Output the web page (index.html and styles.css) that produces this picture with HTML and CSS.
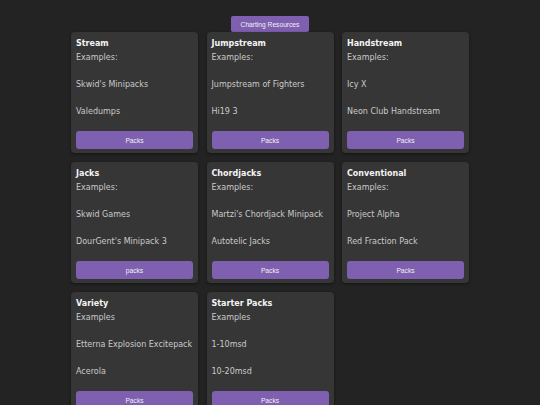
FILE: index.html
```html
<!DOCTYPE html>
<html lang="en">
<head>
<meta charset="utf-8">
<title>Charting Resources</title>
<link rel="stylesheet" href="styles.css">
</head>
<body>
<main class="page">
  <button class="top-btn">Charting Resources</button>
  <section class="grid">
    <div class="card">
      <div class="card-title">Stream</div>
      <div class="card-sub">Examples:</div>
      <div class="card-item">Skwid's Minipacks</div>
      <div class="card-item">Valedumps</div>
      <button class="pack-btn">Packs</button>
    </div>
    <div class="card">
      <div class="card-title">Jumpstream</div>
      <div class="card-sub">Examples:</div>
      <div class="card-item">Jumpstream of Fighters</div>
      <div class="card-item">Hi19 3</div>
      <button class="pack-btn">Packs</button>
    </div>
    <div class="card">
      <div class="card-title">Handstream</div>
      <div class="card-sub">Examples:</div>
      <div class="card-item">Icy X</div>
      <div class="card-item">Neon Club Handstream</div>
      <button class="pack-btn">Packs</button>
    </div>
    <div class="card">
      <div class="card-title">Jacks</div>
      <div class="card-sub">Examples:</div>
      <div class="card-item">Skwid Games</div>
      <div class="card-item">DourGent's Minipack 3</div>
      <button class="pack-btn">packs</button>
    </div>
    <div class="card">
      <div class="card-title">Chordjacks</div>
      <div class="card-sub">Examples:</div>
      <div class="card-item">Martzi's Chordjack Minipack</div>
      <div class="card-item">Autotelic Jacks</div>
      <button class="pack-btn">Packs</button>
    </div>
    <div class="card">
      <div class="card-title">Conventional</div>
      <div class="card-sub">Examples:</div>
      <div class="card-item">Project Alpha</div>
      <div class="card-item">Red Fraction Pack</div>
      <button class="pack-btn">Packs</button>
    </div>
    <div class="card">
      <div class="card-title">Variety</div>
      <div class="card-sub">Examples</div>
      <div class="card-item">Etterna Explosion Excitepack</div>
      <div class="card-item">Acerola</div>
      <button class="pack-btn">Packs</button>
    </div>
    <div class="card">
      <div class="card-title">Starter Packs</div>
      <div class="card-sub">Examples</div>
      <div class="card-item">1-10msd</div>
      <div class="card-item">10-20msd</div>
      <button class="pack-btn">Packs</button>
    </div>
  </section>
</main>
</body>
</html>
```
FILE: styles.css
```css
html, body {
  margin: 0;
  padding: 0;
  background: #232323;
  overflow: hidden;
}
body {
  font-family: "DejaVu Sans", Verdana, sans-serif;
  font-size: 8px;
  color: #cacaca;
}
.page {
  padding-top: 16px;
  display: flex;
  flex-direction: column;
  align-items: center;
}
.top-btn {
  height: 16px;
  padding: 0 9.5px;
  border: none;
  border-radius: 2px;
  background: #7e5fb0;
  color: #f2f2f2;
  font-family: "Liberation Sans", Arial, sans-serif;
  font-size: 6.67px;
  cursor: pointer;
}
.grid {
  width: 398px;
  display: grid;
  grid-template-columns: repeat(3, 1fr);
  column-gap: 8.5px;
  row-gap: 9px;
}
.card {
  background: #363636;
  border-radius: 4px;
  padding: 6.5px 5px 4px;
  display: flex;
  flex-direction: column;
  box-shadow: 0 1px 3px rgba(0, 0, 0, 0.45);
  line-height: 10px;
}
.card-title {
  font-weight: bold;
  color: #f4f4f4;
}
.card-sub {
  margin-top: 4.5px;
}
.card-item {
  margin-top: 17px;
  white-space: nowrap;
}
.pack-btn {
  margin-top: 14px;
  height: 18px;
  border: none;
  border-radius: 3px;
  background: #7e5fb0;
  color: #f2f2f2;
  font-family: "Liberation Sans", Arial, sans-serif;
  font-size: 6.67px;
  cursor: pointer;
}
```
